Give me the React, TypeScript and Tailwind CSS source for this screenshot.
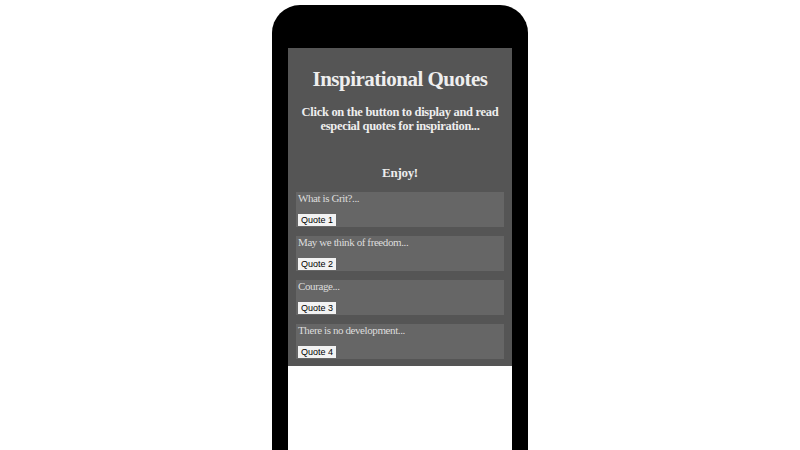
const quotes = [
  { teaser: "What is Grit?...", label: "Quote 1" },
  { teaser: "May we think of freedom...", label: "Quote 2" },
  { teaser: "Courage...", label: "Quote 3" },
  { teaser: "There is no development...", label: "Quote 4" },
];

function QuoteCard({ teaser, label }: { teaser: string; label: string }) {
  return (
    <div className="bg-[#666666] h-[35px] px-[2px] flex flex-col justify-between pb-[1px]">
      <p className="text-[11px] leading-[12px] tracking-[-0.4px] text-[#dddddd]">{teaser}</p>
      <button className="self-start bg-[#f2f2f2] text-black text-[9px] leading-[12px] px-[3px] font-['Liberation_Sans',Arial,sans-serif]">
        {label}
      </button>
    </div>
  );
}

export default function App() {
  return (
    <div className="w-[800px] h-[450px] bg-white overflow-hidden flex justify-center font-['Liberation_Serif','Times_New_Roman',serif]">
      <div className="w-[256px] h-[445px] mt-[5px] bg-black rounded-t-[28px] pt-[43px] px-[16px]">
        <div className="bg-white h-full">
          <div className="bg-[#555555] px-[8px] pt-[19px] pb-[7px] text-[#eeeeee]">
            <h1 className="text-[21px] leading-[24px] tracking-[-0.5px] font-bold text-center">Inspirational Quotes</h1>
            <h3 className="mt-[14px] text-[12.5px] leading-[14px] tracking-[-0.3px] font-bold text-center">
              Click on the button to display and read especial quotes for inspiration...
            </h3>
            <h3 className="mt-[33px] text-[13px] leading-[14px] tracking-[-0.3px] font-bold text-center">Enjoy!</h3>
            <div className="mt-[12px] flex flex-col gap-[9px]">
              {quotes.map((q) => (
                <QuoteCard key={q.label} teaser={q.teaser} label={q.label} />
              ))}
            </div>
          </div>
        </div>
      </div>
    </div>
  );
}
